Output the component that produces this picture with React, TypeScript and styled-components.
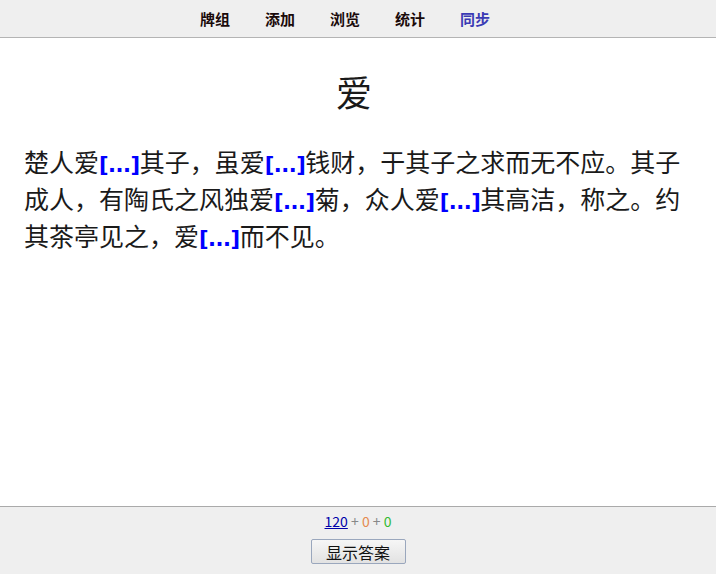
import React from 'react';
import styled, { createGlobalStyle } from 'styled-components';

const GlobalStyle = createGlobalStyle`
  html, body {
    margin: 0;
    padding: 0;
    height: 100%;
    background: #ffffff;
  }
  #root {
    height: 100%;
  }
`;

const Page = styled.div`
  display: flex;
  flex-direction: column;
  height: 100vh;
  overflow: hidden;
`;

const TopBar = styled.nav`
  height: 37px;
  flex: none;
  display: flex;
  justify-content: center;
  align-items: center;
  padding-right: 26px;
  background: #efefef;
  border-bottom: 1px solid #b4b4b4;
`;

const NavItem = styled.a<{ $sync?: boolean }>`
  padding: 0 17.5px;
  font-family: "Noto Sans CJK SC", sans-serif;
  font-size: 15px;
  font-weight: 700;
  line-height: 37px;
  color: ${p => (p.$sync ? '#3a3ab4' : '#1a0a0a')};
  text-decoration: none;
  cursor: pointer;
`;

const CardArea = styled.main`
  flex: 1;
  padding: 33px 24px 0 24px;
  color: #1a1a1a;
`;

const CardInner = styled.div`
  width: 660px;
  font-family: "Liberation Serif", "Noto Sans CJK SC", serif;
`;

const Title = styled.div`
  text-align: center;
  font-size: 36px;
  line-height: 48px;
  margin-bottom: 26px;
`;

const Passage = styled.div`
  font-size: 25px;
  line-height: 37px;
`;

const Cloze = styled.span`
  font-family: "DejaVu Sans", sans-serif;
  font-weight: 700;
  font-size: 21px;
  line-height: 1;
  color: #0000ff;
  letter-spacing: -0.5px;
`;

const BottomBar = styled.footer`
  height: 68px;
  flex: none;
  box-sizing: border-box;
  background: #efefef;
  border-top: 1px solid #aaaaaa;
  display: flex;
  flex-direction: column;
  align-items: center;
  padding-top: 6px;
`;

const Stats = styled.div`
  font-family: "Noto Sans CJK SC", sans-serif;
  font-size: 14px;
  line-height: 17px;
  color: #888888;
`;

const Count = styled.span<{ $kind: 'new' | 'learn' | 'review' }>`
  color: ${p => (p.$kind === 'new' ? '#0000aa' : p.$kind === 'learn' ? '#e58a50' : '#33bb33')};
  text-decoration: ${p => (p.$kind === 'new' ? 'underline' : 'none')};
`;

const AnswerButton = styled.button`
  margin-top: 9px;
  width: 95px;
  height: 25px;
  padding: 0;
  font-family: "Noto Sans CJK SC", sans-serif;
  font-size: 16px;
  line-height: 20px;
  color: #111;
  background: linear-gradient(#f6f6f6, #e2e2e2);
  border: 1px solid #9aa7bd;
  border-radius: 2px;
`;

const navItems = ['牌组', '添加', '浏览', '统计'];

export default function App() {
  return (
    <Page>
      <GlobalStyle />
      <TopBar>
        {navItems.map(n => (
          <NavItem key={n}>{n}</NavItem>
        ))}
        <NavItem $sync>同步</NavItem>
      </TopBar>
      <CardArea>
        <CardInner>
          <Title>爱</Title>
          <Passage>
            楚人爱<Cloze>[...]</Cloze>其子，虽爱<Cloze>[...]</Cloze>钱财，于其子之求而无不应。其子成人，有陶氏之风独爱<Cloze>[...]</Cloze>菊，众人爱<Cloze>[...]</Cloze>其高洁，称之。约其茶亭见之，爱<Cloze>[...]</Cloze>而不见。
          </Passage>
        </CardInner>
      </CardArea>
      <BottomBar>
        <Stats>
          <Count $kind="new">120</Count> + <Count $kind="learn">0</Count> + <Count $kind="review">0</Count>
        </Stats>
        <AnswerButton>显示答案</AnswerButton>
      </BottomBar>
    </Page>
  );
}
